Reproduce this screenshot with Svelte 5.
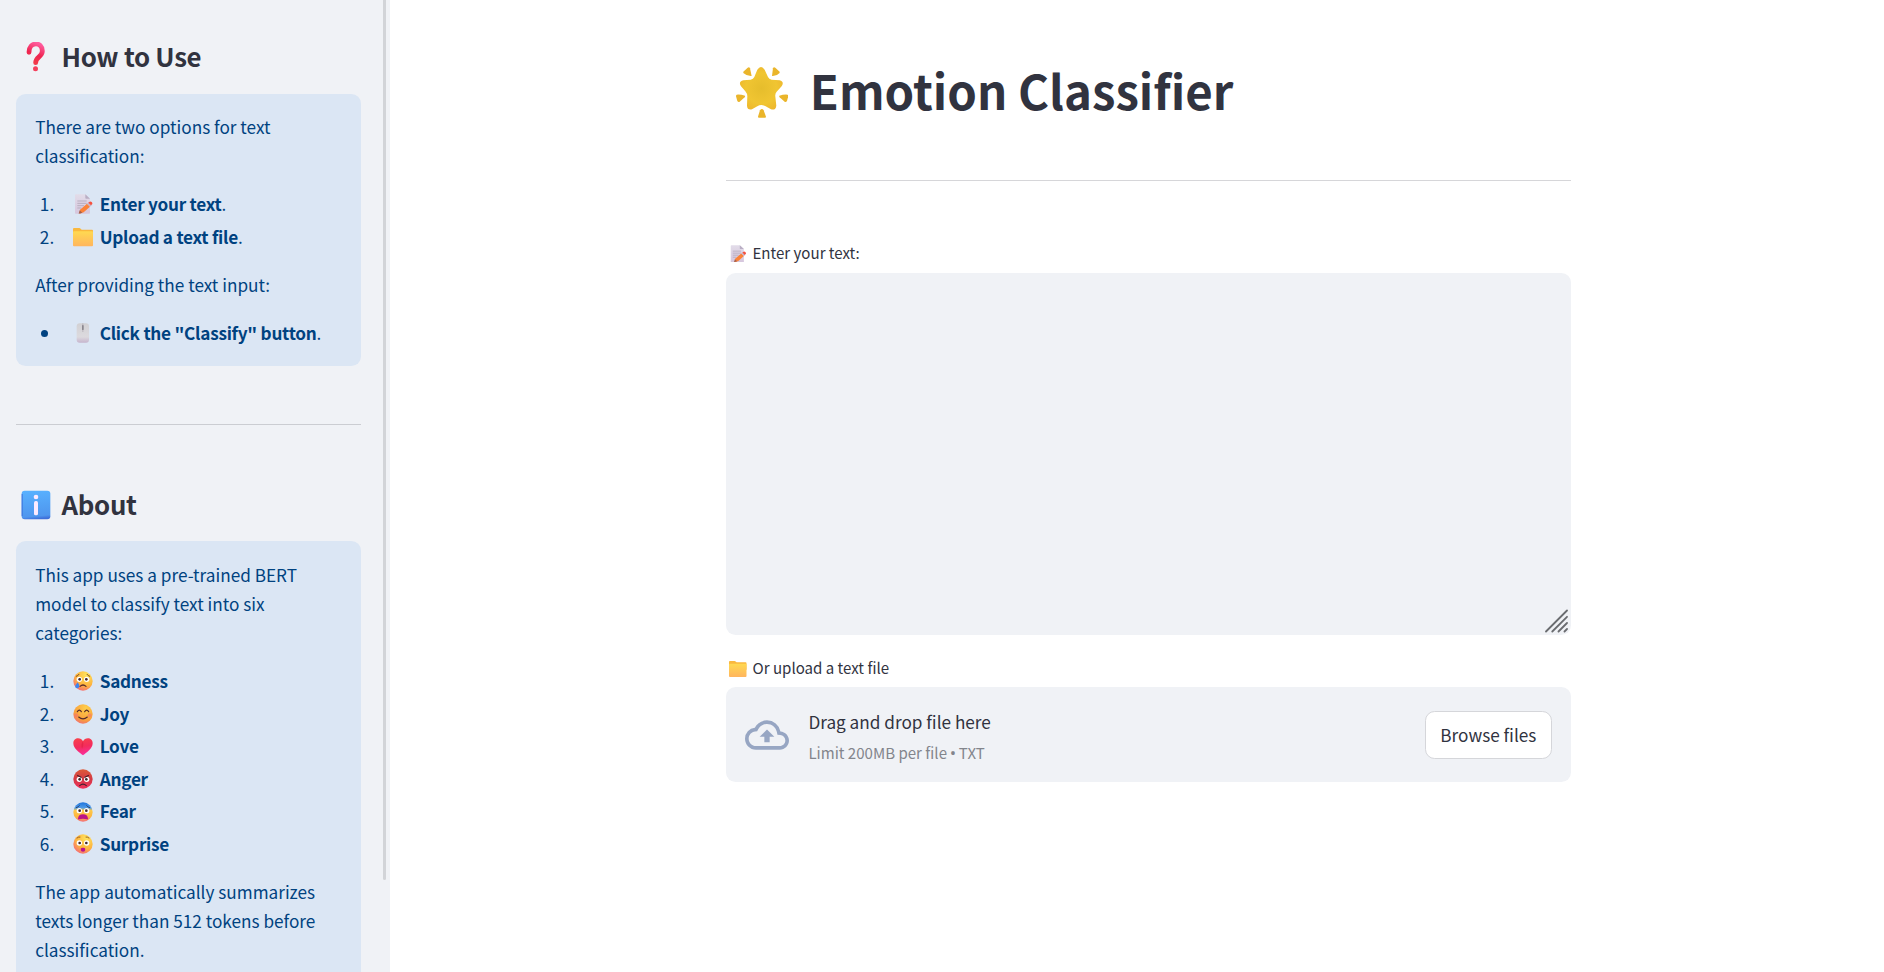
<script>
  const steps = [
    { icon: 'memo', label: 'Enter your text' },
    { icon: 'folder', label: 'Upload a text file' }
  ];
  const emotions = [
    { icon: 'sad', label: 'Sadness' },
    { icon: 'joy', label: 'Joy' },
    { icon: 'heart', label: 'Love' },
    { icon: 'anger', label: 'Anger' },
    { icon: 'fear', label: 'Fear' },
    { icon: 'surprise', label: 'Surprise' }
  ];
</script>

<svg class="defs" width="0" height="0" aria-hidden="true">
  <defs>
    <radialGradient id="g-face" cx="0.68" cy="0.2" r="0.9">
      <stop offset="0" stop-color="#ffe45c" />
      <stop offset="0.6" stop-color="#fdb43f" />
      <stop offset="1" stop-color="#f4647c" />
    </radialGradient>
    <radialGradient id="g-joy" cx="0.65" cy="0.2" r="0.95">
      <stop offset="0" stop-color="#ffcf4a" />
      <stop offset="0.65" stop-color="#f9a03c" />
      <stop offset="1" stop-color="#ee5f86" />
    </radialGradient>
    <linearGradient id="g-anger" x1="0" y1="0" x2="0" y2="1">
      <stop offset="0" stop-color="#dd5a38" />
      <stop offset="0.5" stop-color="#d33a45" />
      <stop offset="1" stop-color="#f0305c" />
    </linearGradient>
    <linearGradient id="g-fear" x1="0" y1="0" x2="0" y2="1">
      <stop offset="0" stop-color="#1f74dc" />
      <stop offset="0.28" stop-color="#4e9be8" />
      <stop offset="0.42" stop-color="#fdc94a" />
      <stop offset="0.75" stop-color="#fdb43f" />
      <stop offset="1" stop-color="#f4707c" />
    </linearGradient>
    <linearGradient id="g-heart" x1="0.3" y1="0" x2="0.5" y2="1">
      <stop offset="0" stop-color="#f8404c" />
      <stop offset="0.5" stop-color="#f32c5c" />
      <stop offset="1" stop-color="#fb2ea0" />
    </linearGradient>
    <linearGradient id="g-folder" x1="0" y1="0" x2="0" y2="1">
      <stop offset="0" stop-color="#ffd951" />
      <stop offset="1" stop-color="#ffb55e" />
    </linearGradient>
    <linearGradient id="g-paper" x1="0" y1="0" x2="0" y2="1">
      <stop offset="0" stop-color="#e2dce9" />
      <stop offset="1" stop-color="#d6c6dd" />
    </linearGradient>
    <linearGradient id="g-mouse" x1="0" y1="0" x2="0" y2="1">
      <stop offset="0" stop-color="#d2d1d4" />
      <stop offset="0.7" stop-color="#dcdade" />
      <stop offset="1" stop-color="#c6b5cd" />
    </linearGradient>
    <linearGradient id="g-q" x1="0.8" y1="0" x2="0.5" y2="1">
      <stop offset="0" stop-color="#ff5c9d" />
      <stop offset="0.6" stop-color="#ee2450" />
      <stop offset="1" stop-color="#f23a4a" />
    </linearGradient>
    <linearGradient id="g-info" x1="0.3" y1="0" x2="0.4" y2="1">
      <stop offset="0" stop-color="#58b1ff" />
      <stop offset="0.9" stop-color="#4f96ee" />
      <stop offset="1" stop-color="#3f70da" />
    </linearGradient>
    <radialGradient id="g-star" cx="0.5" cy="0.5" r="0.6">
      <stop offset="0" stop-color="#e6bd2c" />
      <stop offset="0.6" stop-color="#f0c532" />
      <stop offset="1" stop-color="#edb42c" />
    </radialGradient>
  </defs>
</svg>

{#snippet eyes(y)}
  <circle cx="19" cy={y} r="8" fill="#fff" />
  <circle cx="41" cy={y} r="8" fill="#fff" />
  <circle cx="20" cy={y} r="4" fill="#43292c" />
  <circle cx="40" cy={y} r="4" fill="#43292c" />
{/snippet}

{#snippet emoji(name)}
  <svg class="emoji" viewBox="0 0 60 60" aria-hidden="true">
    {#if name === 'memo'}
      <path d="M6 3a2 2 0 0 1 2-2h29l14 13v43a2 2 0 0 1-2 2H8a2 2 0 0 1-2-2z" fill="url(#g-paper)" />
      <path d="M37 1l14 13H39a2 2 0 0 1-2-2z" fill="#b9aec4" />
      <path d="M13 21h28M13 28h28M13 35h20M13 42h12" stroke="#b1a8ba" stroke-width="2.6" />
      <path d="M21 47L42 29l9 9-19 17-12 4z" fill="#fb8238" />
      <path d="M42 29l5-4 9 9-5 4z" fill="#c9b5c6" />
      <path d="M46 26l4-3q3-2 6 1t2 6l-4 4z" fill="#f5513f" />
      <path d="M20 49l8 7-11 3z" fill="#a4604c" />
    {:else if name === 'folder'}
      <path d="M0 6q0-3 3-3h16q2 0 4 2l3 3h31q3 0 3 3v22H0z" fill="#fab83e" />
      <rect x="0" y="13" width="60" height="45" rx="3" fill="url(#g-folder)" />
    {:else if name === 'mouse'}
      <rect x="11" y="1" width="37" height="58" rx="9" fill="url(#g-mouse)" />
      <path d="M29.500 1v26" stroke="#b4b1b7" stroke-width="2.600" />
      <rect x="27" y="6" width="5" height="15" rx="2.500" fill="#8a878f" />
    {:else if name === 'heart'}
      <path d="M30 55C20 47 1 35 1 19 1 9 8 4 15 4c7 0 12 4 15 9 3-5 8-9 15-9 7 0 14 5 14 15 0 16-19 28-29 36z" fill="url(#g-heart)" />
      <path d="M30 13c2 8 1 14-3 22-3-9-2-16 3-22z" fill="#d81d40" opacity="0.55" />
    {:else if name === 'sad'}
      <circle cx="30" cy="30" r="29" fill="url(#g-face)" />
      <path d="M10 16q5-1 8-6M50 16q-5-1-8-6" fill="none" stroke="#6b3b22" stroke-width="2.600" stroke-linecap="round" />
      {@render eyes(25)}
      <path d="M21 46q9-8 18 0" fill="none" stroke="#5a2b2b" stroke-width="3.600" stroke-linecap="round" />
      <path d="M14 34c4 6 6 10 4 15-2 4-9 4-11 0-2-5 3-9 7-15z" fill="#3f83ee" />
    {:else if name === 'joy'}
      <circle cx="30" cy="30" r="29" fill="url(#g-joy)" />
      <circle cx="10" cy="34" r="6" fill="#f4677a" opacity="0.45" />
      <circle cx="50" cy="34" r="6" fill="#f4677a" opacity="0.45" />
      <path d="M13 23q6-9 12 0M35 23q6-9 12 0" fill="none" stroke="#55292c" stroke-width="3.400" stroke-linecap="round" />
      <path d="M17 39q13 11 26 0" fill="none" stroke="#55292c" stroke-width="3.400" stroke-linecap="round" />
    {:else if name === 'anger'}
      <circle cx="30" cy="30" r="29" fill="url(#g-anger)" />
      {@render eyes(31)}
      <path d="M12 20l14 8-1-5-12-6zM48 20l-14 8 1-5 12-6z" fill="#43202c" />
      <path d="M20 50q10-9 20 0" fill="none" stroke="#43202c" stroke-width="3.400" stroke-linecap="round" />
    {:else if name === 'fear'}
      <circle cx="30" cy="30" r="29" fill="url(#g-fear)" />
      <path d="M10 17q6-1 9-6M50 17q-6-1-9-6" fill="none" stroke="#2b3a63" stroke-width="2.600" stroke-linecap="round" />
      {@render eyes(26)}
      <path d="M15 50q1-13 15-13t15 13q0 3-3 2-12-4-24 0-3 1-3-2z" fill="#bb1287" />
    {:else if name === 'surprise'}
      <circle cx="30" cy="30" r="29" fill="url(#g-face)" />
      <path d="M12 12q4-4 9-3M48 12q-4-4-9-3" fill="none" stroke="#8a4a20" stroke-width="2.600" stroke-linecap="round" />
      {@render eyes(27)}
      <path d="M23.500 44q0-3 6.500-3t6.500 3v4q0 5-6.500 5t-6.500-5z" fill="#b8128f" />
    {/if}
  </svg>
{/snippet}

<div class="app">
  <aside>
    <section class="head">
      <svg class="head-icon" viewBox="0 0 90 90" aria-hidden="true">
        <path d="M24 31C24 -2 64 -2 64 27C64 45 44 44 44 62" fill="none" stroke="url(#g-q)" stroke-width="14.500" stroke-linecap="round" />
        <circle cx="43.500" cy="80" r="7.500" fill="#f4405c" />
      </svg>
      <h2>How to Use</h2>
    </section>
    <div class="card first">
      <p>There are two options for text classification:</p>
      <ol>
        {#each steps as s, i}
          <li><span class="num">{i + 1}.</span>{@render emoji(s.icon)}<span><strong>{s.label}</strong>.</span></li>
        {/each}
      </ol>
      <p>After providing the text input:</p>
      <ul>
        <li><span class="dot"></span>{@render emoji('mouse')}<span><strong>Click the "Classify" button</strong>.</span></li>
      </ul>
    </div>
    <hr />
    <section class="head">
      <svg class="head-icon" viewBox="0 0 90 90" aria-hidden="true">
        <rect x="2" y="2" width="86" height="86" rx="9" fill="url(#g-info)" />
        <path d="M3.500 12v66" stroke="#3c73dc" stroke-width="3" />
        <circle cx="45" cy="21" r="7" fill="#fdeaff" />
        <rect x="39" y="33" width="12" height="43" rx="5" fill="#fdeaff" />
      </svg>
      <h2>About</h2>
    </section>
    <div class="card second">
      <p>This app uses a pre-trained BERT model to classify text into six categories:</p>
      <ol>
        {#each emotions as e, i}
          <li><span class="num">{i + 1}.</span>{@render emoji(e.icon)}<strong>{e.label}</strong></li>
        {/each}
      </ol>
      <p>The app automatically summarizes texts longer than 512 tokens before classification.</p>
    </div>
    <div class="thumb"></div>
  </aside>

  <main>
    <div class="content">
      <header>
        <svg class="star" viewBox="33 36 157 153" aria-hidden="true">
          <path
            d="M97 44Q108 28 119 44L129 66Q132 73 140 74L164 76Q179 80 170 94L155 110Q150 116 151 124L154 152Q152 167 138 163L122 154Q109 146 97 154L81 163Q67 166 66 152L67 124Q67 116 61 109L48 94Q39 80 55 76L77 74Q85 73 88 66Z"
            fill="url(#g-star)"
          />
          <g fill="#eab52b">
            <path d="M55 50l13-12q5-3 7 2l5 23q-14 1-25-9z" />
            <path d="M164 50l-13-12q-5-3-7 2l-3 23q14 1 23-9z" />
            <path d="M35 119q12-1 25 3 1 3-1 5l-15 13q-4 3-7-2l-4-14q0-4 2-5z" />
            <path d="M188 119q-12-1-25 3-1 3 1 5l15 13q4 3 7-2l4-14q0-4-2-5z" />
            <path d="M105 166q6-8 11 0l7 19q0 3-3 3h-18q-3 0-3-3z" />
          </g>
        </svg>
        <h1>Emotion Classifier</h1>
      </header>
      <hr />
      <div class="label">{@render emoji('memo')}<span>Enter your text:</span></div>
      <div class="textarea">
        <svg width="24" height="24" viewBox="0 0 24 24" aria-hidden="true">
          <path d="M1 22.500L22 1.500M7.300 22.500L22 7.800M13.500 22.500L22 14M19.500 22.500L22 20" stroke="#6a6c70" stroke-width="1.800" stroke-linecap="round" />
        </svg>
      </div>
      <div class="label upload-label">{@render emoji('folder')}<span>Or upload a text file</span></div>
      <div class="uploader">
        <svg class="cloud" viewBox="0 0 24 24" aria-hidden="true">
          <path
            d="M19.350 10.040A7.490 7.490 0 0 0 12 4C9.110 4 6.600 5.640 5.350 8.040A5.994 5.994 0 0 0 0 14c0 3.310 2.690 6 6 6h13c2.760 0 5-2.240 5-5 0-2.640-2.050-4.780-4.650-4.960zM19 18H6c-2.210 0-4-1.790-4-4 0-2.050 1.530-3.760 3.560-3.970l1.070-.11.5-.95A5.469 5.469 0 0 1 12 6c2.620 0 4.880 1.860 5.390 4.430l.3 1.500 1.530.11A2.980 2.980 0 0 1 22 15c0 1.650-1.350 3-3 3zM8 13h2.550v3h2.900v-3H16l-4-4z"
            fill="#97a6c3"
          />
        </svg>
        <div class="drop">
          <span class="main-line">Drag and drop file here</span>
          <small>Limit 200MB per file <i>•</i> TXT</small>
        </div>
        <button>Browse files</button>
      </div>
    </div>
  </main>
</div>

<style>
  :global(body) {
    margin: 0;
    background: #fff;
    overflow: hidden;
  }
  .defs {
    position: absolute;
  }
  .app {
    display: flex;
    height: 972px;
    overflow: hidden;
    font-family: 'Noto Sans CJK SC', 'Noto Sans', sans-serif;
    font-size: 17.2px;
    line-height: 28.8px;
    color: #31333f;
  }
  aside {
    position: relative;
    box-sizing: border-box;
    width: 390px;
    flex: none;
    height: 972px;
    overflow: hidden;
    padding: 38.5px 29px 0 16px;
    background: #f0f2f6;
  }
  .thumb {
    position: absolute;
    top: 0;
    left: 383px;
    width: 3px;
    height: 880px;
    background: #d2d4d8;
    border-radius: 0 0 2px 2px;
  }
  h1,
  h2,
  p,
  ol,
  ul {
    margin: 0;
    padding: 0;
    list-style: none;
  }
  .head {
    display: flex;
    align-items: center;
    height: 34.5px;
    padding-left: 5px;
  }
  .head-icon {
    width: 30px;
    height: 30px;
    margin: 2px 10.500px 0 0;
  }
  h2 {
    font-size: 25.8px;
    line-height: 34.5px;
    font-weight: 700;
    letter-spacing: -0.3px;
  }
  .card {
    display: flex;
    flex-direction: column;
    gap: 19.2px;
    box-sizing: border-box;
    margin-top: 21px;
    padding: 19.2px 19.2px 0;
    border-radius: 9.6px;
    background: #dbe6f4;
    color: #004280;
  }
  .first {
    height: 272px;
  }
  .second {
    height: 480px;
    padding-top: 20.400px;
    margin-top: 20px;
  }
  ol,
  ul {
    display: flex;
    flex-direction: column;
    gap: 3.84px;
  }
  li {
    display: flex;
    align-items: center;
    height: 28.8px;
    white-space: nowrap;
  }
  .num {
    width: 19px;
    margin-right: 19px;
    text-align: right;
  }
  .dot {
    width: 7px;
    height: 7px;
    margin: 1px 25px 0 6px;
    border-radius: 50%;
    background: #004280;
  }
  .emoji {
    flex: none;
    width: 20px;
    height: 20px;
    margin-right: 6.5px;
  }
  strong {
    font-weight: 700;
    letter-spacing: -0.26px;
  }
  hr {
    height: 1px;
    border: 0;
    background: #cbcdd2;
  }
  aside hr {
    margin: 58px 0 61.5px;
  }
  main {
    flex: 1;
    padding-left: 336px;
  }
  .content {
    width: 845px;
    padding-top: 57.7px;
  }
  header {
    display: flex;
    align-items: center;
    height: 63.4px;
    padding-left: 10px;
  }
  .star {
    width: 52.300px;
    height: 51px;
    margin: 6px 21.500px 0 0;
  }
  h1 {
    font-size: 47.36px;
    line-height: 63.4px;
    font-weight: 700;
    white-space: nowrap;
  }
  main hr {
    margin: 58.9px 0 60px;
    background: #d6d6d9;
  }
  .label {
    display: flex;
    align-items: center;
    height: 25.2px;
    padding-left: 3px;
    font-size: 15.07px;
  }
  .label .emoji {
    width: 17.5px;
    height: 17.5px;
    margin: 0 6px 0 0;
  }
  .textarea {
    display: flex;
    align-items: flex-end;
    justify-content: flex-end;
    box-sizing: border-box;
    height: 361.7px;
    margin-top: 6.8px;
    padding: 0 2px 1.5px 0;
    border-radius: 9.6px;
    background: #f0f2f6;
  }
  .textarea svg {
    fill: none;
  }
  .upload-label {
    margin-top: 21.3px;
  }
  .uploader {
    display: flex;
    align-items: center;
    box-sizing: border-box;
    height: 95px;
    margin-top: 5.8px;
    padding: 1.500px 19.2px 0;
    border-radius: 9.6px;
    background: #f0f2f6;
  }
  .cloud {
    width: 44px;
    height: 44px;
    margin-right: 19.2px;
  }
  .drop {
    display: flex;
    flex: 1;
    flex-direction: column;
    padding-top: 5.500px;
  }
  .drop small {
    margin-top: 2.4px;
    font-size: 15.07px;
    color: #83858c;
  }
  .drop i {
    font-family: 'Open Sans', sans-serif;
    font-style: normal;
    font-size: 17px;
    line-height: 0;
    margin: 0 -0.700px;
  }
  button {
    box-sizing: border-box;
    width: 127px;
    height: 48px;
    padding: 0;
    border: 1px solid #d5d6da;
    border-radius: 9.6px;
    background: #fff;
    color: #31333f;
    font: inherit;
    white-space: nowrap;
  }
</style>
